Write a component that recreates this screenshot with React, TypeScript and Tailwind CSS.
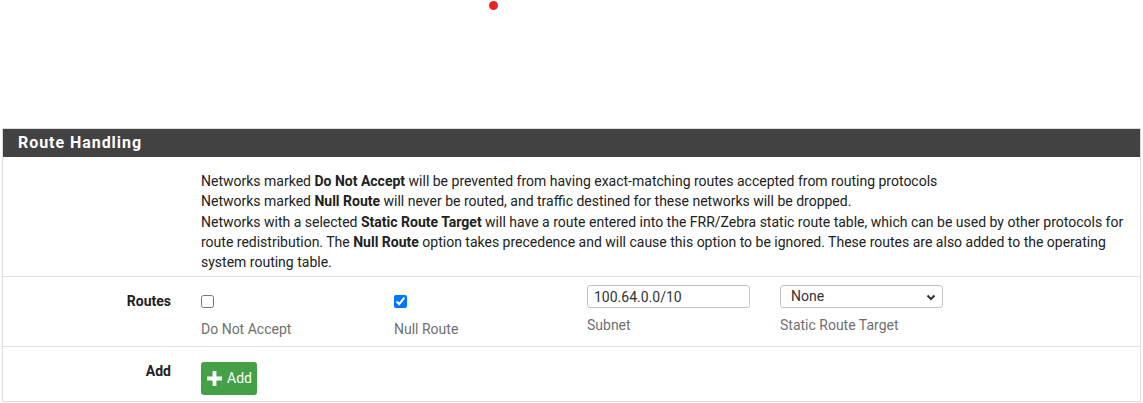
import { useState } from "react";

const font = { fontFamily: "Roboto, 'Liberation Sans', sans-serif" };

export default function App() {
  const [doNotAccept, setDoNotAccept] = useState(false);
  const [nullRoute, setNullRoute] = useState(true);
  const [subnet, setSubnet] = useState("100.64.0.0/10");

  return (
    <div className="h-[403px] w-[1143px] bg-white text-[14px] text-[#212121]" style={font}>
      <div className="relative h-[128px]">
        <span className="absolute left-[489px] top-[1px] h-[9px] w-[9px] rounded-full bg-[#e62424]" />
      </div>

      <div className="mx-[2px] border border-[#dcdcdc]">
        <div className="flex h-[28px] items-center bg-[#424242] px-[15px] text-[16px] font-bold tracking-[0.95px] text-white">
          Route Handling
        </div>

        <div className="flex border-b border-[#e0e0e0] pb-[4px] pt-[14px]">
          <div className="w-[198px] shrink-0" />
          <p className="pr-[4px] leading-[20.25px]">
            Networks marked <b>Do Not Accept</b> will be prevented from having exact-matching routes accepted from routing protocols
            <br />
            Networks marked <b>Null Route</b> will never be routed, and traffic destined for these networks will be dropped.
            <br />
            Networks with a selected <b>Static Route Target</b> will have a route entered into the FRR/Zebra static route table, which can be used by other protocols for route redistribution. The <b>Null Route</b> option takes precedence and will cause this option to be ignored. These routes are also added to the operating system routing table.
          </p>
        </div>

        <div className="flex h-[70px] border-b border-[#e0e0e0]">
          <div className="w-[168px] shrink-0 pt-[14px] text-right font-bold">Routes</div>
          <div className="ml-[30px] flex">
            <div className="w-[193px] pt-[18px]">
              <input
                type="checkbox"
                checked={doNotAccept}
                onChange={(e) => setDoNotAccept(e.target.checked)}
                className="m-0 block h-[13px] w-[13px] accent-[#0075ff]"
              />
              <div className="mt-[11px] text-[#6f6f6f]">Do Not Accept</div>
            </div>
            <div className="w-[193px] pt-[18px]">
              <input
                type="checkbox"
                checked={nullRoute}
                onChange={(e) => setNullRoute(e.target.checked)}
                className="m-0 block h-[13px] w-[13px] accent-[#0075ff]"
              />
              <div className="mt-[11px] text-[#6f6f6f]">Null Route</div>
            </div>
            <div className="w-[193px] pt-[8px]">
              <input
                value={subnet}
                onChange={(e) => setSubnet(e.target.value)}
                className="block h-[23px] w-[163px] rounded-[3px] border border-[#c4c4c4] px-[6px] text-[14px] text-[#333] outline-none"
                style={font}
              />
              <div className="mt-[7px] text-[#6f6f6f]">Subnet</div>
            </div>
            <div className="pt-[8px]">
              <div className="flex h-[23px] w-[163px] items-center justify-between rounded-[3px] border border-[#c4c4c4] pl-[10px] pr-[6px] text-[#333]">
                <span>None</span>
                <svg width="10" height="8" viewBox="0 0 10 8">
                  <path d="M1.5 2.5 L5 6 L8.5 2.5" fill="none" stroke="#333" strokeWidth="2" />
                </svg>
              </div>
              <div className="mt-[7px] text-[#6f6f6f]">Static Route Target</div>
            </div>
          </div>
        </div>

        <div className="flex h-[54px]">
          <div className="w-[168px] shrink-0 pt-[14px] text-right font-bold">Add</div>
          <div className="ml-[30px] pt-[15px]">
            <button className="flex h-[33px] items-center gap-[4px] rounded-[3px] bg-[#43a047] pl-[5px] pr-[5px] text-white">
              <svg width="17" height="17" viewBox="0 0 16 16">
                <path d="M8 1 V15 M1 8 H15" stroke="white" strokeWidth="3.6" />
              </svg>
              <span>Add</span>
            </button>
          </div>
        </div>
      </div>
    </div>
  );
}
